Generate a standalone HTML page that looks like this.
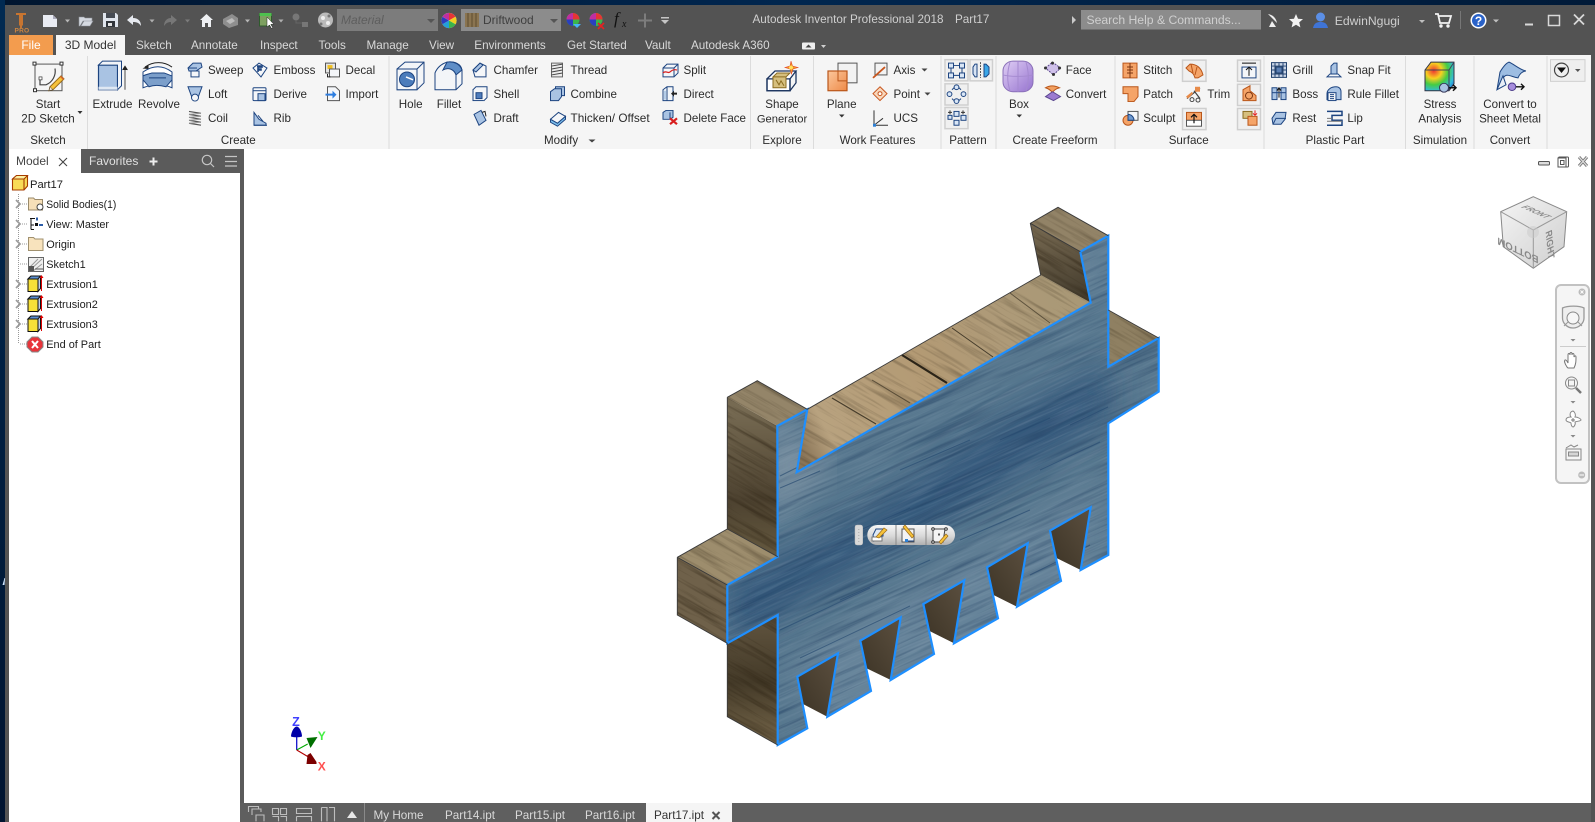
<!DOCTYPE html>
<html><head><meta charset="utf-8"><title>Autodesk Inventor Professional 2018</title>
<style>
html,body{margin:0;padding:0;background:#fff;width:1595px;height:822px;overflow:hidden}
svg{display:block}
text{font-family:"Liberation Sans",sans-serif;font-size:11.6px;fill:#2b2b2b}
.m{text-anchor:middle}
.tb text,text.tb{fill:#d9d9d9;font-size:11.7px}
.tr text{font-size:10.9px;fill:#1c1c1c}
.s{fill:none;stroke:#1d4480;stroke-width:1}
.b{fill:#a9c3e3;stroke:#1d4480;stroke-width:1}
.w{fill:#f4f6f9;stroke:#1d4480;stroke-width:1}
.o{fill:#f5a468;stroke:#b9561a;stroke-width:1}
.g{fill:#e4e4e4;stroke:#555;stroke-width:1}
.bt{fill:#f0f0f0;stroke:#cfcfcf;stroke-width:1.5}
.d{fill:none;stroke:#999;stroke-width:1;stroke-dasharray:1 1}
</style></head><body>
<svg width="1595" height="822" viewBox="0 0 1595 822" xmlns="http://www.w3.org/2000/svg">
<defs>
<linearGradient id="nv" x1="0" x2="1" y1="0" y2="0"><stop offset="0" stop-color="#00152f"/><stop offset=".5" stop-color="#00264f"/><stop offset="1" stop-color="#001a38"/></linearGradient>
<linearGradient id="lf" x1="0" y1="0" x2="0" y2="1"><stop offset="0" stop-color="#012a52"/><stop offset="1" stop-color="#001430"/></linearGradient>
<linearGradient id="pl" x1="0" y1="0" x2="0" y2="1"><stop offset="0" stop-color="#f6f6f6"/><stop offset=".55" stop-color="#d9d9d9"/><stop offset="1" stop-color="#b0b0b0"/></linearGradient>
<linearGradient id="topb" gradientUnits="userSpaceOnUse" x1="800" y1="450" x2="1090" y2="290"><stop offset="0" stop-color="#8a7558"/><stop offset=".1" stop-color="#b8a27f"/><stop offset=".45" stop-color="#b39a74"/><stop offset=".7" stop-color="#ae9a78"/><stop offset="1" stop-color="#a89876"/></linearGradient>
<linearGradient id="sd1" gradientUnits="userSpaceOnUse" x1="750" y1="410" x2="750" y2="560"><stop offset="0" stop-color="#766a52"/><stop offset=".6" stop-color="#4d4230"/><stop offset="1" stop-color="#665a40"/></linearGradient>
<linearGradient id="sd2" gradientUnits="userSpaceOnUse" x1="750" y1="620" x2="750" y2="745"><stop offset="0" stop-color="#5f533e"/><stop offset=".5" stop-color="#443a28"/><stop offset="1" stop-color="#75664a"/></linearGradient>
<linearGradient id="sd3" gradientUnits="userSpaceOnUse" x1="1050" y1="230" x2="1070" y2="300"><stop offset="0" stop-color="#72654e"/><stop offset="1" stop-color="#453d2e"/></linearGradient>
<linearGradient id="nt" x1="0" y1="1" x2="1" y2="0"><stop offset="0" stop-color="#3c3325"/><stop offset="1" stop-color="#5c5040"/></linearGradient>
<linearGradient id="cb" x1="0" y1="0" x2="1" y2="1"><stop offset="0" stop-color="#f4f4f4"/><stop offset="1" stop-color="#cfcfcf"/></linearGradient>
<linearGradient id="bx" x1="0" y1="0" x2="1" y2="1"><stop offset="0" stop-color="#e0cff5"/><stop offset="1" stop-color="#9572cf"/></linearGradient>
<linearGradient id="pln" x1="0" y1="0" x2="1" y2="1"><stop offset="0" stop-color="#fbc79c"/><stop offset="1" stop-color="#ee8a48"/></linearGradient>
<radialGradient id="st" cx=".3" cy=".3" r=".9"><stop offset="0" stop-color="#e33"/><stop offset=".3" stop-color="#f8d020"/><stop offset=".55" stop-color="#4c4"/><stop offset=".8" stop-color="#3bd"/><stop offset="1" stop-color="#26c"/></radialGradient>
<filter id="gb" x="0" y="0" width="1" height="1" color-interpolation-filters="sRGB"><feTurbulence type="fractalNoise" baseFrequency="0.01 0.2" numOctaves="3" seed="4"/><feColorMatrix values="0 0 0 0 .1 0 0 0 0 .22 0 0 0 0 .36 3 0 0 0 -1.45"/></filter>
<filter id="gl" x="0" y="0" width="1" height="1" color-interpolation-filters="sRGB"><feTurbulence type="fractalNoise" baseFrequency="0.02 0.45" numOctaves="2" seed="9"/><feColorMatrix values="0 0 0 0 .62 0 0 0 0 .7 0 0 0 0 .77 2.4 0 0 0 -1.05"/></filter>
<filter id="gt" x="0" y="0" width="1" height="1" color-interpolation-filters="sRGB"><feTurbulence type="fractalNoise" baseFrequency="0.015 0.22" numOctaves="3" seed="12"/><feColorMatrix values="0 0 0 0 .17 0 0 0 0 .13 0 0 0 0 .07 3 0 0 0 -1.45"/></filter>
<filter id="bl"><feGaussianBlur stdDeviation="16"/></filter>
<clipPath id="face"><polygon points="777.3,426 807.3,409.3 796.7,472.3 1090.7,302.7 1080.3,251.7 1108.3,235.7 1108.3,366.7 1158.7,338 1158.7,391.6 1108.3,423.3 1108.3,555 1080.7,570 1090.7,507.3 1050,530.7 1061,581 1017,606.7 1027.7,543.3 987,567.3 998,618.3 954,643.3 964.3,580.3 923.3,604 934,654 890.7,680 900.7,617.3 860.3,640.7 871,691 827.3,716.7 838,653.3 797.3,676.7 807.3,728.3 777.7,745 777.7,615 727.3,643.3 727.3,585 777.7,556.7"/></clipPath>
<clipPath id="tan"><path d="M807.3,409.3 1040.7,275 1090.7,302.7 796.7,472.3zM727.3,397.3 757.3,380.7 807.3,409.3 777.3,426zM1030.3,223.3 1058,207.3 1108.3,235.7 1080.3,251.7zM1108.3,310 1158.7,338 1108.3,366.7zM677.3,557.3 727.3,529 777.7,556.7 727.3,585z"/></clipPath>
<clipPath id="sid"><path d="M727.3,397.3 777.3,426 777.7,556.7 727.3,529zM677.3,557.3 727.3,585 727.3,643.3 677.3,615zM727.3,643.3 777.7,615 777.7,745 727.3,716.7zM1030.3,223.3 1080.3,251.7 1090.7,302.7 1040.7,275z"/></clipPath>
</defs>

<!-- window frame -->
<rect width="1595" height="822" fill="#fff"/>
<rect width="1595" height="5" fill="url(#nv)"/>
<rect y="0" width="5" height="822" fill="url(#lf)"/>
<rect x="5" y="5" width="1590" height="50.500" fill="#535353"/>
<rect x="5" y="5" width="4" height="817" fill="#535353"/>
<rect x="1591" y="5" width="4" height="817" fill="#535353"/>
<path d="M2.500 585l2-7h.6l-.6 7z" fill="#cfe6ff"/>
<rect x="9" y="55" width="1582" height="94" fill="#f5f5f5"/>

<!-- quick access -->
<g>
<path d="M16 13h10v2h-3v10l-1 1v2h-2v-2l-1-1V15h-3z" fill="#c87530"/>
<text x="14.500" y="32.500" style="font-size:6.600px;font-weight:bold;fill:#d08640;letter-spacing:.2px">PRO</text>
<path d="M43 15h10l4 4v8H43z" fill="#e8ebf2"/><path d="M53 15l4 4h-4z" fill="#aab"/>
<path d="M65 19.500h5l-2.500 3z" fill="#b8b8b8"/>
<path d="M79 17h5l1 1h7v3H83l-3 5h-1zM81 26l3-5h9l-3 5z" fill="#d5d9e0" stroke="#8b8f96" stroke-width=".6"/>
<path d="M103 13h13l2 2v12h-15z" fill="#dfe4ec"/><rect x="106" y="13" width="9" height="5" fill="#454a52"/><rect x="106" y="21" width="9" height="6" fill="#30343a"/><rect x="108" y="23" width="4" height="3" fill="#e5e5e5"/>
<path d="M127 20l6-5v3c5 0 8 3 8 8-2-3-4-4-8-4v3z" fill="#e6e9ef"/>
<path d="M149.500 19.500h5l-2.500 3z" fill="#b0b0b0"/>
<path d="M177 20l-6-5v3c-4 0-7 3-7 8 2-3 4-4 7-4v3z" fill="#777"/>
<path d="M185 19.500h5l-2.500 3z" fill="#7c7c7c"/>
<path d="M200 20l6.500-6 6.500 6h-2v7h-3v-4h-3v4h-3v-7z" fill="#eef0f3"/>
<path d="M223 19l9-5 6 4v7l-9 3-6-4z" fill="#8e8e8e"/><path d="M226 21l6-3 3 3-5 3z" fill="#bbb"/>
<path d="M245 19.500h5l-2.500 3z" fill="#b8b8b8"/>
<rect x="259.500" y="14" width="12" height="12" fill="#7da060" stroke="#2e5b2c"/><rect x="259.500" y="13" width="12" height="3" fill="#4ec04e"/>
<path d="M267 17v10l2.500-2 2 3.500 1.300-.8-2-3.300H274z" fill="#fff" stroke="#222" stroke-width=".5"/>
<path d="M278.500 19.500h5l-2.500 3z" fill="#b0b0b0"/>
<circle cx="296" cy="17" r="3.500" fill="#777"/><rect x="302" y="22" width="6" height="5" fill="#777"/><path d="M296 20v3h6" stroke="#666" fill="none"/>
<circle cx="325.500" cy="20" r="7.500" fill="#bbb"/><circle cx="323" cy="18" r="2" fill="#eee"/><circle cx="328" cy="23" r="2" fill="#eee"/><circle cx="329" cy="16" r="1.500" fill="#777"/><circle cx="321" cy="24" r="1.500" fill="#777"/>
<rect x="337" y="9" width="101" height="22" fill="#7c7c7c"/>
<text x="341" y="24" style="font-style:italic;fill:#5e5e5e;font-size:12px">Material</text>
<path d="M427 19h8l-4 4z" fill="#555"/>
<circle cx="449" cy="20.500" r="7.500" fill="#fff" stroke="#999" stroke-width=".5"/>
<path d="M449 20.500V13a7.500 7.500 0 0 1 6.500 3.800z" fill="#e63535"/><path d="M449 20.500l6.500-3.700a7.500 7.500 0 0 1 0 7.500z" fill="#f0d020"/><path d="M449 20.500l6.500 3.800a7.500 7.500 0 0 1-6.500 3.700z" fill="#3cb54a"/><path d="M449 20.500V28a7.500 7.500 0 0 1-6.500-3.700z" fill="#23a0d8"/><path d="M449 20.500l-6.500 3.800a7.500 7.500 0 0 1 0-7.500z" fill="#2a3fbf"/><path d="M449 20.500l-6.500-3.700A7.500 7.500 0 0 1 449 13z" fill="#c02ea0"/>
<rect x="461" y="9" width="100" height="22" fill="#8c8c8c"/>
<rect x="465" y="13" width="14" height="14" fill="#8a7450"/><path d="M468 13v14M472 13v14M476 13v14" stroke="#5c4b30"/>
<text x="483" y="24" style="fill:#3f3f3f;font-size:12px">Driftwood</text>
<path d="M550 19h8l-4 4z" fill="#555"/>
<g id="wh"><circle cx="573" cy="19.500" r="6.500" fill="#3cb54a"/><path d="M573 19.500v-6.500a6.500 6.500 0 0 1 6.500 6.500z" fill="#e63535"/><path d="M573 19.500h-6.500a6.500 6.500 0 0 1 6.500-6.500z" fill="#c02ea0"/><path d="M573 19.500v6.500a6.500 6.500 0 0 1-6.500-6.500z" fill="#2a3fbf"/></g>
<path d="M573 24h8l-4 4z" fill="#47b4f4"/>
<use href="#wh" x="23"/>
<path d="M598 23l6 6M604 23l-6 6" stroke="#e42222" stroke-width="1.700"/>
<text x="614" y="24" style="font-family:'Liberation Serif',serif;font-style:italic;font-size:17px;fill:#111">f</text><text x="622" y="27" style="font-family:'Liberation Serif',serif;font-style:italic;font-size:10px;fill:#111">x</text>
<path d="M645 13.500v14M638 20.500h14" stroke="#7d7d7d" stroke-width="2"/>
<path d="M661 17h8v1.500h-8zM661 20h8l-4 4z" fill="#c5c5c5"/>
<text x="752.500" y="23" class="tb" style="font-size:11.700px;fill:#cfcfcf">Autodesk Inventor Professional 2018</text>
<text x="955" y="23" class="tb" style="fill:#cfcfcf">Part17</text>
</g>

<!-- right of title -->
<path d="M1072 16l4 4-4 4z" fill="#c9c9c9"/>
<rect x="1081" y="10" width="180" height="19.500" fill="#8c8c8c"/>
<text x="1086.500" y="24" style="fill:#cfcfcf;font-size:12.200px">Search Help &amp; Commands...</text>
<path d="M1268 14c5 1 8 4 9 9l-9-9zM1272 21l-3 6h7z" fill="#eee"/>
<path d="M1296 14l2 4.700 5 .4-3.800 3.300 1.200 5-4.400-2.700-4.400 2.700 1.200-5-3.800-3.300 5-.4z" fill="#f2f2f2"/>
<circle cx="1320.500" cy="17" r="4.500" fill="#5b8fe6"/><path d="M1313 28c1-5 4-6 7.500-6s6.500 1 7.500 6z" fill="#3f74d6"/>
<text x="1334.700" y="25" class="tb" style="font-size:12.200px;fill:#cfcfcf">EdwinNgugi</text>
<path d="M1419 20h6l-3 3z" fill="#c0c0c0"/>
<path d="M1435 14h3l2 9h9l2-7h-12" fill="none" stroke="#f2f2f2" stroke-width="1.800"/><circle cx="1441" cy="26" r="1.700" fill="#f2f2f2"/><circle cx="1448" cy="26" r="1.700" fill="#f2f2f2"/>
<rect x="1460" y="11" width="1" height="18" fill="#777"/>
<circle cx="1478.500" cy="20.500" r="8" fill="#fff"/><circle cx="1478.500" cy="20.500" r="6.500" fill="#2a62c8"/><text x="1478.500" y="25" class="m" style="font-size:12px;font-weight:bold;fill:#fff">?</text>
<path d="M1493 19.500h6l-3 3z" fill="#c0c0c0"/>
<rect x="1525" y="23.500" width="8" height="2" fill="#d8d8d8"/>
<rect x="1548.500" y="15.500" width="11" height="10" fill="none" stroke="#d8d8d8" stroke-width="1.500"/>
<path d="M1574 14.500l10 10M1584 14.500l-10 10" stroke="#d8d8d8" stroke-width="1.800"/>

<!-- tabs -->
<rect x="9" y="35" width="44" height="20" fill="#f39c4e"/>
<text x="31" y="49" class="m" style="fill:#fff;font-size:12px">File</text>
<rect x="56" y="35" width="69" height="21" fill="#f5f5f5"/>
<text x="90.500" y="49" class="m" style="font-size:12px;fill:#333">3D Model</text>
<g class="tb">
<text x="136" y="49">Sketch</text><text x="191" y="49">Annotate</text><text x="260" y="49">Inspect</text><text x="318.500" y="49">Tools</text><text x="366.500" y="49">Manage</text><text x="429" y="49">View</text><text x="474.300" y="49">Environments</text><text x="567" y="49">Get Started</text><text x="645" y="49">Vault</text><text x="691" y="49">Autodesk A360</text>
</g>
<rect x="802" y="42.500" width="13" height="7" rx="1" fill="#eee"/><path d="M805.500 47.500h6l-3-3z" fill="#444"/><path d="M821 45h5l-2.500 3z" fill="#d0d0d0"/>

<!-- ribbon dividers -->
<g fill="#dcdcdc"><rect x="87" y="56" width="1" height="93"/><rect x="388.500" y="56" width="1" height="93"/><rect x="750" y="56" width="1" height="93"/><rect x="813" y="56" width="1" height="93"/><rect x="940.500" y="56" width="1" height="93"/><rect x="995.500" y="56" width="1" height="93"/><rect x="1114.500" y="56" width="1" height="93"/><rect x="1263.500" y="56" width="1" height="93"/><rect x="1405" y="56" width="1" height="93"/><rect x="1473.500" y="56" width="1" height="93"/><rect x="1546.500" y="56" width="1" height="93"/></g>

<!-- ribbon text -->
<g>
<text x="48" y="108" class="m">Start</text><text x="48" y="122.500" class="m">2D Sketch</text><path d="M77.500 111h5l-2.500 3z" fill="#333"/><text x="48" y="144" class="m">Sketch</text>
<text x="112.500" y="108" class="m">Extrude</text><text x="159" y="108" class="m">Revolve</text><text x="238.300" y="144" class="m">Create</text>
<text x="208" y="74">Sweep</text><text x="208" y="98">Loft</text><text x="208" y="122">Coil</text>
<text x="273.500" y="74">Emboss</text><text x="273.500" y="98">Derive</text><text x="273.500" y="122">Rib</text>
<text x="345.500" y="74">Decal</text><text x="345.500" y="98">Import</text>
<text x="410.700" y="108" class="m">Hole</text><text x="449" y="108" class="m">Fillet</text>
<text x="493.500" y="74">Chamfer</text><text x="493.500" y="98">Shell</text><text x="493.500" y="122">Draft</text>
<text x="570.500" y="74">Thread</text><text x="570.500" y="98">Combine</text><text x="570.500" y="122" style="font-size:11.800px">Thicken/ Offset</text>
<text x="683.500" y="74">Split</text><text x="683.500" y="98">Direct</text><text x="683.500" y="122">Delete Face</text>
<text x="544" y="144">Modify</text><path d="M588.500 139.500h7l-3.500 3z" fill="#444"/>
<text x="782" y="108" class="m">Shape</text><text x="782" y="122.500" class="m" style="font-size:11.200px">Generator</text><text x="782" y="144" class="m">Explore</text>
<text x="841.700" y="108" class="m">Plane</text><path d="M839 114.500h5.500l-2.700 3z" fill="#333"/>
<text x="893.500" y="74">Axis</text><text x="893.500" y="98">Point</text><text x="893.500" y="122">UCS</text>
<path d="M921.500 68.500h6l-3 3z" fill="#444"/><path d="M924.500 92.500h6l-3 3z" fill="#444"/>
<text x="877.500" y="144" class="m">Work Features</text><text x="968" y="144" class="m">Pattern</text>
<text x="1019" y="108" class="m">Box</text><path d="M1016.500 114.500h5.500l-2.700 3z" fill="#333"/>
<text x="1065.800" y="74">Face</text><text x="1065.800" y="98">Convert</text><text x="1055" y="144" class="m">Create Freeform</text>
<text x="1143.300" y="74">Stitch</text><text x="1143.300" y="98">Patch</text><text x="1143.300" y="122">Sculpt</text><text x="1207.400" y="98">Trim</text><text x="1188.700" y="144" class="m">Surface</text>
<text x="1292.400" y="74">Grill</text><text x="1292.400" y="98">Boss</text><text x="1292.400" y="122">Rest</text>
<text x="1347.400" y="74">Snap Fit</text><text x="1347.400" y="98">Rule Fillet</text><text x="1347.400" y="122">Lip</text><text x="1335" y="144" class="m">Plastic Part</text>
<text x="1440" y="108" class="m">Stress</text><text x="1440" y="122.500" class="m">Analysis</text><text x="1440" y="144" class="m">Simulation</text>
<text x="1510" y="108" class="m">Convert to</text><text x="1510" y="122.500" class="m">Sheet Metal</text><text x="1510" y="144" class="m">Convert</text>
</g>

<g transform="scale(1 .986)">
<!-- ribbon icons: sketch -->
<rect x="35" y="65" width="27" height="27" fill="none" stroke="#555"/>
<g fill="#fff" stroke="#333"><rect x="33" y="63" width="3" height="3"/><rect x="60" y="63" width="3" height="3"/><rect x="33.500" y="90" width="3" height="3"/></g>
<path d="M40 79.500v6.500h6a15 15 0 0 0 9-16.500" fill="none" stroke="#444" stroke-width="1.200"/><rect x="39" y="78" width="3" height="3" fill="#fff" stroke="#333" stroke-width=".7"/>
<path d="M50 88l11-11 3 3-11 11-4 1z" fill="#f6c23a" stroke="#9a6a1a"/><path d="M50 88l3 3-4 1z" fill="#f8e4c8" stroke="#333" stroke-width=".5"/><path d="M60 78l3 3 1-1-3-3z" fill="#d9642c"/>
<!-- extrude -->
<rect x="98.500" y="66" width="19" height="25" class="b" style="stroke-width:1.200"/><path d="M98.500 66l4-4h19v25l-4 4V66z" fill="#f1f4f8" stroke="#1d4480"/><path d="M98.500 88h19v3h-19z" fill="#dfe8f3"/>
<path d="M125 91V69M122.500 71l2.500-4 2.500 4" stroke="#222" fill="#222" stroke-width=".8"/>
<!-- revolve -->
<path d="M143 73c10-7 20-7 29 0v16c-9-4-19-4-29 0z" fill="#fff" stroke="#1d4480"/><path d="M143 77c4-2 6-2 9-3l12 0c3 1 5 2 8 3v4l-6 7c-7-2-12-2-17 0l-6-7z" fill="#7c9fca" stroke="#1d4480"/><path d="M149 79h17" stroke="#1d4480"/>
<path d="M145 68c8-6 19-6 27 0" fill="none" stroke="#222"/><path d="M142.500 69.500l6-3.500v4z" fill="#222"/>
<!-- sweep -->
<g transform="translate(187 63)"><path d="M1 6l5-5h8l1 4-6 4H2z" class="b"/><rect x="4" y="9" width="8" height="6" class="w"/><path d="M1 6h9" class="s"/></g>
<!-- loft -->
<g transform="translate(187 87)"><path d="M1 1h14l-4 11H5z" class="b"/><circle cx="8" cy="12" r="3.500" class="w"/></g>
<!-- coil -->
<g transform="translate(188 112)" stroke="#555" stroke-width="1.200"><path d="M1 1l12 2M1 4l12 2M1 7l12 2M1 10l12 2M1 13l12 2"/></g><g transform="translate(188 112)" stroke="#999"><path d="M13 3L1 4M13 6L1 7M13 9L1 10M13 12L1 13"/></g>
<!-- emboss -->
<g transform="translate(252 63)"><path d="M1 6L7 1l8 5-6 9z" class="w"/><path d="M5 4h5v1H6v2h3v1H6v2" stroke="#1d4480" stroke-width="1.600" fill="none"/></g>
<!-- derive -->
<g transform="translate(252 87)"><rect x="1" y="2" width="13" height="13" rx="1" class="w"/><path d="M1 5h13" class="s"/><rect x="6" y="8" width="7" height="7" class="b"/></g>
<!-- rib -->
<g transform="translate(252 112)"><path d="M2 15V2l5 7 7 4v2z" class="b"/><path d="M2 15h13M6 5l5 6" class="s"/></g>
<!-- decal -->
<g transform="translate(324.500 63)"><rect x="1" y="1" width="10" height="10" class="g"/><rect x="3" y="3" width="5" height="4" fill="#f0c020"/><rect x="5" y="7" width="10" height="8" class="w" style="stroke:#555"/><path d="M3 12v3h3" stroke="#222" fill="none"/></g>
<!-- import -->
<g transform="translate(324.500 87)"><path d="M3 1h8l4 4v10H3z" class="w" style="stroke:#555"/><path d="M1 8h7V5l4 4-4 4v-3H1z" fill="#2d7de0"/></g>
<!-- hole -->
<path d="M397 70l8-7h19v21l-7 7h-20z" fill="#f3f5f8" stroke="#1d4480"/><path d="M397 70h20v21M417 70l7-7" class="s"/><rect x="397" y="70" width="20" height="21" class="w"/><circle cx="407" cy="80.500" r="7.500" fill="#4b7cbb" stroke="#1d4480"/><path d="M406 78l7 3" stroke="#fff" stroke-width="1.500"/>
<!-- fillet -->
<path d="M435 91V74c2-5 6-9 12-11 8-1 14 2 15 8v14l-6 6z" fill="#f3f5f8" stroke="#1d4480"/><path d="M447 63c7-1 13 2 15 8l-6 5c-2-6-8-8-13-5z" fill="#5f8ec7" stroke="#1d4480"/><path d="M456 76v15" class="s"/>
<!-- chamfer -->
<g transform="translate(472 63)"><path d="M1 8l7-7 6 3v11H3z" class="w"/><path d="M1 8l7-7 3 2-7 7z" class="b"/></g>
<!-- shell -->
<g transform="translate(472 87)"><rect x="1" y="4" width="11" height="11" class="w"/><path d="M1 4l3-3h11v11l-3 3" class="w"/><rect x="4" y="7" width="6" height="6" fill="#4e7cbc" stroke="#1d4480"/></g>
<!-- draft -->
<g transform="translate(472 111)"><path d="M2 5l7-4 5 10-7 5z" class="b"/><path d="M10 3l3-1 1 5" class="s" style="stroke:#222"/></g>
<!-- thread -->
<g transform="translate(549.500 63)"><rect x="2" y="1" width="11" height="14" fill="#ececec" stroke="#666"/><path d="M2 4l11-2M2 7l11-2M2 10l11-2M2 13l11-2" stroke="#444"/></g>
<!-- combine -->
<g transform="translate(549.500 87)"><path d="M6 1h9v9H6z" class="b"/><path d="M1 6l4-3h7v8l-3 4H1z" class="b"/></g>
<!-- thicken -->
<g transform="translate(549.500 112)"><path d="M1 9l8-7 7 4-8 7z" class="w"/><path d="M1 9v3l7 4 8-7V6l-8 7z" fill="#7cc0ee" stroke="#1d4480"/></g>
<!-- split -->
<g transform="translate(662 63)"><path d="M1 6l4-4h11v9l-4 4H1z" class="w"/><path d="M1 6h11v9M12 6l4-4" class="s"/><path d="M1 11c3-3 5 1 7-1s4-3 7-2" stroke="#d81e1e" fill="none" stroke-width="1.200"/></g>
<!-- direct -->
<g transform="translate(662 87)"><path d="M1 4l4-3h6v14H1z" class="w"/><path d="M5 1v14" class="s"/><path d="M9 8l3-3v2h3v2h-3v2z" fill="#222"/><rect x="2" y="5" width="2" height="9" fill="#b5cde8"/></g>
<!-- delete face -->
<g transform="translate(662 111)"><path d="M1 3l3-2h7v7l-3 2H1z" class="b"/><path d="M8 3v7" class="s"/><path d="M8 9l7 6M15 9l-7 6" stroke="#d81e1e" stroke-width="2.200"/></g>
<!-- shape generator -->
<path d="M767 80l8-8h21l-6 8v12h-23z" fill="#fff" stroke="#1d3560" stroke-width="1.300"/><rect x="767" y="80" width="23" height="12" fill="none" stroke="#1d3560" stroke-width="1.300"/><path d="M790 92l6-8V72" fill="none" stroke="#1d3560" stroke-width="1.300"/>
<path d="M773 78h13l4-4h-13z M773 78v11h13V78" fill="#d6bf7e" stroke="#8a6b20"/><path d="M776 81l3 5 2-4 3 5" stroke="#8a6b20" fill="none"/>
<path d="M791 62l1.500 5 5.500 1.500-5 1.500-1.500 5-1.500-5-5-1.500 5-1.500z" fill="#f0a020" stroke="#e4452a" stroke-width=".6"/><circle cx="791" cy="68.500" r="2" fill="#ffe060"/>
<!-- plane -->
<rect x="838" y="64" width="19" height="20" fill="#f2f2f2" stroke="#555"/>
<rect x="828" y="72" width="19" height="20" fill="url(#pln)" stroke="#b9561a" stroke-width="1.200"/><path d="M838 72v10h9" stroke="#b9561a" fill="none"/>
<!-- axis -->
<g transform="translate(872 63)"><rect x="3" y="1" width="12" height="12" fill="#f3f3f3" stroke="#555"/><path d="M1 16l12-11" stroke="#c8561e" stroke-width="1.800"/></g>
<!-- point -->
<g transform="translate(872 87)"><path d="M8 1l7 7-7 7-7-7z" fill="#f8d8bd" stroke="#c8561e"/><circle cx="8" cy="8" r="2" fill="#fff" stroke="#c8561e"/></g>
<!-- ucs -->
<g transform="translate(873 111)"><path d="M1 1v15h14M1 16l9-7" stroke="#333" fill="none"/><rect x="0" y="14.500" width="3" height="3" fill="#2c7fd4"/></g>
<!-- pattern -->
<rect x="945" y="60.500" width="23" height="21.500" class="bt"/><rect x="970" y="60.500" width="22.500" height="21.500" class="bt"/><rect x="945" y="85" width="23" height="21.500" class="bt"/><rect x="945" y="109" width="23" height="21.500" class="bt"/>
<g fill="#d9e6f6" stroke="#1d4480"><rect x="948.500" y="64" width="5" height="5"/><rect x="959.500" y="64" width="5" height="5"/><rect x="948.500" y="74" width="5" height="5"/><rect x="959.500" y="74" width="5" height="5"/>
<circle cx="956.500" cy="88.500" r="2.400"/><circle cx="956.500" cy="102.500" r="2.400"/><circle cx="949.500" cy="95.500" r="2.400"/><circle cx="963.500" cy="95.500" r="2.400"/>
<rect x="954" y="113" width="5" height="5"/><rect x="954" y="122" width="5" height="5"/><rect x="961" y="117" width="5" height="5"/><rect x="948" y="117" width="4" height="4"/></g>
<path d="M953.500 66.500h6M951 69v5M962 69v5M953.500 76.500h6" stroke="#1d4480"/>
<path d="M952 91l2-2M961 91l-2-2M952 100l2 2M961 100l-2 2" stroke="#1d4480"/>
<path d="M950 112v4M948 114h4M963 112v4M961 114h4" stroke="#333"/>
<path d="M975 65l-2 3v7l2 3h2V65z" fill="#d8e4f4" stroke="#1d4480"/><path d="M986 65l3 3v7l-3 3h-2V65z" fill="#3aa6e8" stroke="#1d4480"/><path d="M980.500 63v16" stroke="#555" stroke-dasharray="2 1"/>
<!-- box -->
<rect x="1003" y="62" width="30" height="31" rx="10" fill="url(#bx)" stroke="#8a70b8"/><path d="M1003 76c8 2 22 2 30 0M1018 62v31M1010 63c-3 10-3 20 0 29M1026 63c3 10 3 20 0 29" stroke="#a58ad0" fill="none"/>
<!-- face / convert freeform -->
<g transform="translate(1044.500 62)"><path d="M1 7l7-6 8 6-7 7z" fill="#cfc0ea" stroke="#5c4890" stroke-dasharray="2 1"/><circle cx="8" cy="2" r="1.500" fill="#333"/><circle cx="1" cy="7" r="1.500" fill="#333"/><circle cx="15" cy="7" r="1.500" fill="#333"/><circle cx="9" cy="13.500" r="1.500" fill="#333"/></g>
<g transform="translate(1044.500 86)"><path d="M1 3c5-3 10-2 14 0-4 1-6 3-7 5-2-3-4-4-7-5z" fill="#f2a060" stroke="#b9561a"/><path d="M1 12l7-5 8 5-7 4z" fill="#9b7ad0" stroke="#5c4890"/></g>
<!-- surface -->
<g transform="translate(1122 63)"><rect x="1" y="1" width="14" height="15" class="o"/><path d="M8 1v15M5 5h6M5 8h6M5 11h6" stroke="#7a3510"/></g>
<g transform="translate(1122 87)"><path d="M1 1h15v10l-4 5H6V8H1z" class="o"/></g>
<g transform="translate(1122 111)"><circle cx="6" cy="11" r="5" class="o"/><rect x="6" y="2" width="10" height="9" class="w" style="stroke:#555"/><path d="M6 11V5a6 6 0 0 1 6 6z" fill="#6e99cf" stroke="#1d4480"/></g>
<rect x="1182.500" y="61" width="23.500" height="21.500" class="bt"/><rect x="1182.500" y="110" width="23.500" height="21.500" class="bt"/>
<path d="M1186 69l4-4c6 0 11 3 13 11l-5 3-3 0c-1-4-3-6-6-7z" class="o"/><path d="M1191 65l2 9M1197 68l-2 8" stroke="#b9561a"/>
<rect x="1186.500" y="114" width="15" height="8" class="o"/><rect x="1186.500" y="122" width="15" height="6" fill="#fff" stroke="#555"/><path d="M1194 125v-9M1191 119l3-3 3 3" stroke="#111" fill="none" stroke-width="1.200"/>
<g transform="translate(1186 87)"><path d="M1 13l13-11M8 5l6 8" stroke="#444" stroke-width="1.200"/><circle cx="6" cy="14" r="2" fill="none" stroke="#444"/><circle cx="12" cy="14.500" r="2" fill="none" stroke="#444"/><path d="M0 11l6-5 1 2-5 5z" fill="#e78b4a"/><path d="M9 1l5 0v5l-5 0z" fill="#e78b4a"/></g>
<rect x="1237.500" y="61" width="23" height="21.500" class="bt"/><rect x="1237.500" y="85.500" width="23" height="21.500" class="bt"/><rect x="1237.500" y="110" width="23" height="21.500" class="bt"/>
<rect x="1242" y="68" width="14" height="11" class="w"/><path d="M1249 77v-9M1246 71l3-3 3 3M1242 64h14" stroke="#111" fill="none"/>
<path d="M1243 91l7-4v5l6 5v5h-13z" class="o"/><circle cx="1249" cy="97" r="3.500" fill="none" stroke="#7a3510"/>
<rect x="1243" y="113" width="9" height="7" fill="#d6bf7e" stroke="#8a6b20"/><rect x="1248" y="118" width="9" height="9" class="o"/><path d="M1255 112v5M1253 115l2 2 2-2" stroke="#e42222" fill="none"/>
<!-- plastic -->
<g transform="translate(1271 63)" stroke="#23426e"><rect x="0.500" y="0.500" width="15" height="15" fill="#c7d3e5"/><path d="M4 1v14M8 1v14M12 1v14M1 4h14M1 8h14M1 12h14" fill="none"/><rect x="5" y="5" width="6" height="6" fill="#5b7fb3"/></g>
<g transform="translate(1271 87)"><rect x="1" y="2" width="5" height="12" class="b"/><rect x="10" y="2" width="5" height="12" class="b"/><path d="M8 12V3M6 5l2-3 2 3" stroke="#111" fill="none"/><path d="M1 7h14" class="s"/></g>
<g transform="translate(1271 111)"><path d="M1 9l4-6h10l-1 7-4 5H2z" class="b"/><path d="M2 15l3-6h10" class="s"/></g>
<g transform="translate(1326 63)"><path d="M5 13V4l3-3h3v12z" class="b"/><path d="M1 15h14l-3-3H4z" class="w"/></g>
<g transform="translate(1326 87)"><path d="M1 14V8c0-4 4-7 9-7 3 0 5 2 5 5v8z" class="b"/><rect x="2" y="7" width="8" height="8" class="w"/><path d="M4 9h4M4 11h4M4 13h4" class="s"/></g>
<g transform="translate(1326 111)"><path d="M1 2h15v4H6v5h10v5H1" class="w" style="stroke-width:1.500"/><path d="M1 9h5M1 12h15" stroke="#777"/></g>
<!-- stress -->
<path d="M1425 71l6-8h23v22l-5 7h-24z" fill="url(#st)" stroke="#334"/><path d="M1425 71h24v21M1449 71l5-8" fill="none" stroke="#445"/>
<circle cx="1444" cy="89" r="4.500" fill="#a9c3e3" stroke="#335"/><path d="M1449 89h6M1453 86l3 3-3 3" stroke="#111" stroke-width="1.500" fill="none"/>
<!-- convert sheet metal -->
<path d="M1497 91l3-18c3-5 6-9 9-10 5 2 11 8 17 9-4 0-7 4-8 7-6-1-10-4-13-2-3 2-6 10-8 14z" fill="#9dbde2" stroke="#1d4480"/><path d="M1497 91l6-14 3 9z" fill="#e8eef6" stroke="#1d4480"/>
<circle cx="1512" cy="88" r="3.800" fill="#a68cdc" stroke="#4a3a8a"/><path d="M1516 88h8M1521 85l3 3-3 3" stroke="#111" stroke-width="1.400" fill="none"/>
<!-- ribbon dropdown -->
<rect x="1550.500" y="60.500" width="34.500" height="22" fill="#efefef" stroke="#cfcfcf"/>
<circle cx="1561.500" cy="71" r="7" fill="none" stroke="#444" stroke-width="1.200"/><path d="M1557 68.500h9l-4.500 5.500z" fill="#111"/><path d="M1575 70h5.500l-2.700 3z" fill="#555"/>
</g>

<!-- Panel -->
<rect x="81" y="149" width="163" height="24" fill="#5b5b5b"/>
<rect x="240" y="149" width="4" height="673" fill="#5b5b5b"/>
<text x="16" y="165" style="font-size:12px;fill:#444">Model</text>
<path d="M59 158l8 8M67 158l-8 8" stroke="#444" stroke-width="1.100"/>
<text x="89" y="165" style="font-size:12px;fill:#e0e0e0">Favorites</text>
<path d="M153.500 157.500v8M149.500 161.500h8" stroke="#eee" stroke-width="2"/>
<circle cx="207" cy="160" r="4.700" fill="none" stroke="#c5c5c5" stroke-width="1.200"/><path d="M210.500 163.500l3.500 3.500" stroke="#c5c5c5" stroke-width="1.200"/>
<path d="M225 156.500h12M225 161.500h12M225 166h12" stroke="#c5c5c5" stroke-width="1.200"/>

<!-- tree -->
<path class="d" d="M18.500 194V344M20 204h8M20 224h8M20 244h8M20 264h8M20 284h8M20 304h8M20 324h8M20 344h8"/>
<g class="tr">
<text x="30" y="188" style="font-size:11.200px">Part17</text>
<text x="46.300" y="208" textLength="70" lengthAdjust="spacingAndGlyphs">Solid Bodies(1)</text><text x="46.300" y="228">View: Master</text><text x="46.300" y="248">Origin</text><text x="46.300" y="268">Sketch1</text><text x="46.300" y="288">Extrusion1</text><text x="46.300" y="308">Extrusion2</text><text x="46.300" y="328">Extrusion3</text><text x="46.300" y="348">End of Part</text>
</g>
<path d="M12.500 179l4-3.500h11V186l-3.500 4H12.500z" fill="#f8dc58" stroke="#a63c00" stroke-width="1.100"/><path d="M12.500 179H24v11M24 179l3.500-3.500" fill="none" stroke="#a63c00" stroke-width="1.100"/><path d="M12.500 179l4-3.500h11L24 179z" fill="#fdf0a0" stroke="#a63c00"/>
<g fill="none" stroke="#9a9a9a" stroke-width="1.700"><path d="M16 200l4 4-4 4M16 220l4 4-4 4M16 240l4 4-4 4M16 280l4 4-4 4M16 300l4 4-4 4M16 320l4 4-4 4"/></g>
<path d="M28.500 198h5l1.500 1.500h7.500V210h-14z" fill="#f6dfb8" stroke="#9a8a6a"/><circle cx="40" cy="207" r="3" fill="#fff" stroke="#444"/>
<path d="M30 218.500h5M31 218.500v11M31 225h3M31 229.500h3" stroke="#111" fill="none"/><rect x="35" y="223" width="3" height="3" fill="#111"/><rect x="39" y="224" width="4" height="2" fill="#2c5da8"/><rect x="36" y="217.500" width="2" height="3" fill="#2c5da8"/>
<path d="M28.500 237.500h5l1.500 1.500h8v11.500H28.500z" fill="#f8e3bd" stroke="#a0906e"/>
<g transform="translate(28 257)"><rect x=".5" y=".5" width="15" height="14" fill="#efefef" stroke="#666"/><path d="M1 14L14 2M2 10l8-8M5 14l9-7" stroke="#999"/><path d="M1 9h5v5H1z" fill="#555"/><path d="M7 12h8" stroke="#555"/></g>
<g id="ex"><rect x="28" y="279" width="10" height="12.500" fill="#f6e038" stroke="#111"/><path d="M28 279l3-3h9.500v12.500l-2.500 3V279z" fill="#c0d0e8" stroke="#111"/><path d="M28 279l3-3h9.500L38 279z" fill="#5b8fd0" stroke="#111"/><path d="M41.500 291v-14" stroke="#d00"/><path d="M39.500 278l2-3 2 3z" fill="#d00"/></g>
<use href="#ex" y="20"/><use href="#ex" y="40"/>
<path d="M32 337h6l5 5v5l-5 5h-6l-5-5v-5z" fill="#e8343a" stroke="#888"/><path d="M32 341l6 7M38 341l-6 7" stroke="#fff" stroke-width="2"/>

<!-- bottom bar -->
<rect x="240" y="803" width="1351" height="19" fill="#5f5f5f"/>
<g fill="none" stroke="#bdbdbd" stroke-width="1.100"><path d="M248.500 812v-5.500h10V809M252 815v-6h9v3M256 821.400v-6.400h8v6.400"/><path d="M272.500 808.500h6v6h-6zM280.500 808.500h6v6h-6zM272.500 816.500h6v4.900M280.500 816.500h6v4.900"/><path d="M296.500 808.500h15v5h-15zM296.500 816.500h15v4.900M296.500 816.500v4.900"/><path d="M321.500 807.500h5.500V821.400M329 807.500h5.500V821.400M321.500 807.500V821.400"/></g>
<path d="M347 818l5-7 5 7z" fill="#e8e8e8"/><rect x="364" y="803" width="1" height="19" fill="#8a8a8a"/>
<g class="tb"><text x="373.500" y="818.800">My Home</text><text x="445" y="818.800">Part14.ipt</text><text x="515" y="818.800">Part15.ipt</text><text x="585" y="818.800">Part16.ipt</text></g>
<rect x="646" y="803" width="86" height="19" fill="#f5f5f5"/>
<text x="654" y="818.800" style="fill:#333;font-size:11.700px">Part17.ipt</text>
<path d="M712.500 812l7 7M719.500 812l-7 7" stroke="#555" stroke-width="2"/>

<!-- window buttons -->
<rect x="1538.500" y="161.500" width="11" height="3.500" rx="1" fill="#ddd" stroke="#555"/>
<rect x="1558.500" y="157" width="10" height="10" rx="1" fill="none" stroke="#555"/><rect x="1558" y="158" width="8" height="9" fill="#fff" stroke="#555"/><rect x="1560.500" y="160.500" width="3.500" height="4" fill="none" stroke="#555"/>
<path d="M1579 157l8 9M1587 157l-8 9" stroke="#777" stroke-width="3"/><path d="M1579 157l8 9M1587 157l-8 9" stroke="#ddd" stroke-width="1.300"/>

<!-- view cube -->
<path d="M1533.300 196.700l33.400 15-2.700 35-30.700 21.600-30-21.600-2.600-35z" fill="url(#cb)" stroke="#888"/>
<path d="M1500.700 211.700l32.600 18.300 33.400-18.300M1533.300 230v38.300" fill="none" stroke="#999"/>
<circle cx="1533" cy="232" r="6" fill="#c9c9c9" opacity=".5"/>
<text transform="translate(1533.500 213) matrix(.82 .36 -.9 .38 0 0)" class="m" style="font-size:9px;fill:#888;font-style:italic;font-weight:bold">FRONT</text>
<text transform="translate(1518 247) matrix(-.95 -.45 0 -1 0 0)" class="m" style="font-size:10px;fill:#888;font-weight:bold">BOTTOM</text>
<text transform="translate(1547 246) matrix(.1 1 -1 .45 0 0)" class="m" style="font-size:9px;fill:#888;font-weight:bold">RIGHT</text>

<!-- nav bar -->
<rect x="1556" y="285" width="33" height="198" rx="5" fill="#f5f5f5" stroke="#c2c2c2" stroke-width="2"/>
<circle cx="1582" cy="292" r="3.500" fill="#bbb"/><path d="M1580.500 290.500l3 3M1583.500 290.500l-3 3" stroke="#fff"/>
<path d="M1562.500 308c5-2.500 17-2.500 21.500 0v10c0 6-6 10-11 10-6 0-10.500-5-10.500-10z" fill="#eee" stroke="#999" stroke-width="1.300"/><circle cx="1573" cy="318" r="6" fill="#f6f6f6" stroke="#888"/><path d="M1564 326l4-4M1582 326l-4-4" stroke="#999"/>
<path d="M1570.500 339h5l-2.500 2.500z" fill="#888"/><rect x="1560" y="346" width="26" height="1" fill="#ccc"/>
<path d="M1567 367c-2-3-3-6-2-7 1-.5 2 1 3 3v-8c0-2 2-2 2 0v-1c0-2 2-2 2 0v1c0-2 2-2 2 0v2c1-2 2-1 2 0 0 4 0 7-2 11h-6z" fill="#fff" stroke="#777"/>
<circle cx="1571.500" cy="383" r="6" fill="#f5f5f5" stroke="#888"/><rect x="1568.500" y="380" width="6" height="6" fill="none" stroke="#888"/><path d="M1576 388l5 5" stroke="#777" stroke-width="2.500"/>
<path d="M1570.500 401h5l-2.500 2.500z" fill="#888"/>
<path d="M1573 411c-4 1-3 5-2 6-3 0-5 1-5 3s4 2 5 3c0 2 1 4 2 4s3-3 2-5c3-1 6-1 6-2s-3-3-6-3c1-2 0-5-2-6z" fill="#fff" stroke="#888"/><path d="M1573 418v4M1571 420h4" stroke="#777"/>
<path d="M1570.500 435h5l-2.500 2.500z" fill="#888"/>
<rect x="1566" y="449" width="15" height="11" fill="#f5f5f5" stroke="#888"/><rect x="1568.500" y="452" width="10" height="4" fill="#d5d5d5" stroke="#888"/><path d="M1566 448l5-3 3 2 4-2" stroke="#888" fill="none"/>
<circle cx="1581.700" cy="475" r="3.500" fill="#bbb"/><rect x="1579.500" y="474.500" width="4.500" height="1" fill="#fff"/>

<!-- triad -->
<path d="M296.700 750V736" stroke="#1111cc" stroke-width="1.300"/><path d="M291 736.500c0-4 3-10 5.700-10 2.700 0 5.300 6 5.300 10-3 1-8 1-11 0z" fill="#0000a8"/>
<path d="M296.700 750l11-6" stroke="#0a0" stroke-width="1.100"/><path d="M306.500 738l11-1-7 11z" fill="#006f00"/>
<path d="M296.700 750l11 6.500" stroke="#b00000" stroke-width="1.100"/><path d="M306.500 764l1-9 3-2 6 9v2z" fill="#7c0000"/>
<text x="296" y="726" class="m" style="font-size:12.500px;fill:#4040ff;font-weight:bold">Z</text>
<text x="321.700" y="740" class="m" style="font-size:12px;fill:#44ee44;font-weight:bold">Y</text>
<text x="321.700" y="770.500" class="m" style="font-size:12px;fill:#ff5050;font-weight:bold">X</text>

<!-- 3D part -->
<path d="M727.300,397.300 777.300,426 777.700,556.700 727.300,529z" fill="url(#sd1)"/>
<path d="M677.300,557.300 727.300,585 727.300,643.300 677.300,615z" fill="#6f614a"/>
<path d="M727.300,643.300 777.700,615 777.700,745 727.300,716.700z" fill="url(#sd2)"/>
<path d="M1030.300,223.300 1080.300,251.700 1090.700,302.700 1040.700,275z" fill="url(#sd3)"/>
<path d="M807.300,409.300 1040.700,275 1090.700,302.700 796.700,472.300z" fill="url(#topb)"/>
<path d="M727.300,397.300 757.300,380.700 807.300,409.300 777.300,426z" fill="#948569"/>
<path d="M1030.300,223.300 1058,207.300 1108.300,235.700 1080.300,251.700z" fill="#928367"/>
<path d="M1108.300,310 1158.700,338 1108.300,366.700z" fill="#8f8062"/>
<path d="M677.300,557.300 727.300,529 777.700,556.700 727.300,585z" fill="#9d8d6d"/>
<g clip-path="url(#tan)">
<g transform="translate(900 380) skewY(30) translate(-900 -380)"><rect x="670" y="450" width="120" height="250" filter="url(#gt)" opacity=".28"/><rect x="790" y="100" width="375" height="440" filter="url(#gt)" opacity=".28"/></g>
<g stroke="#2b2418" fill="none" stroke-width="1"><path d="M832 398l44 26" stroke-width="1.200" opacity=".8"/><path d="M872 380l38 23" opacity=".6"/><path d="M902 355l45 28" stroke-width="2.200"/><path d="M952 328l41 29" opacity=".8"/><path d="M1010 293l40 30" opacity=".6"/></g>
</g>
<g clip-path="url(#sid)"><g transform="translate(800 500) skewY(30) translate(-800 -500)"><rect x="670" y="430" width="115" height="330" filter="url(#gt)" opacity=".45"/><rect x="1025" y="80" width="70" height="70" filter="url(#gt)" opacity=".45"/></g></g>
<!-- notches -->
<g fill="url(#nt)">
<path d="M1050,530.700 1090.700,507.300 1080.700,570 1056,557.700z"/>
<path d="M987,567.300 1027.700,543.300 1017,606.700 993,594.700z"/>
<path d="M923.300,604 964.300,580.300 954,643.300 929.500,631z"/>
<path d="M860.300,640.700 900.700,617.300 890.700,680 866,668z"/>
<path d="M797.300,676.700 838,653.300 827.300,716.700 803,704z"/>
</g>
<!-- blue face -->
<g clip-path="url(#face)">
<rect x="700" y="220" width="480" height="540" fill="#58788f"/>
<path d="M727 585L860 515 1000 420 1110 360V420L1000 490 860 570 727 645z" fill="#2d5278" filter="url(#bl)" opacity=".85"/>
<path d="M760 440L800 425 830 470 770 520z" fill="#8296a6" filter="url(#bl)" opacity=".8"/>
<path d="M1000 340L1100 280 1110 240 1080 240z" fill="#7790a4" filter="url(#bl)" opacity=".6"/>
<path d="M790 660L1100 480 1100 560 820 740z" fill="#7791a6" filter="url(#bl)" opacity=".5"/>
<g transform="translate(940 480) skewY(-24) translate(-940 -480)"><rect x="700" y="200" width="480" height="500" filter="url(#gb)" opacity=".4"/><rect x="700" y="200" width="480" height="500" filter="url(#gl)" opacity=".2"/></g>
<g stroke="#264a70" fill="none" stroke-width="1" opacity=".65"><path d="M780 476l28-14M780 488l40-17M780 630l90-42M800 658l110-52M840 600l90-40M960 540l70-30M1040 470l60-28M1030 575l60-30M1070 425l38-18M900 470l70-30M860 530l50-22M1000 440l50-22"/></g>
</g>
<path d="M777.300,426 807.300,409.300 796.700,472.300 1090.700,302.700 1080.300,251.700 1108.300,235.700 1108.300,366.700 1158.700,338 1158.700,391.600 1108.300,423.300 1108.300,555 1080.700,570 1090.700,507.300 1050,530.700 1061,581 1017,606.700 1027.700,543.300 987,567.300 998,618.300 954,643.300 964.300,580.300 923.300,604 934,654 890.700,680 900.700,617.300 860.300,640.700 871,691 827.300,716.700 838,653.300 797.300,676.700 807.300,728.300 777.700,745 777.700,615 727.300,643.300 727.300,585 777.700,556.700z" fill="none" stroke="#1e8fff" stroke-width="2.200"/>
<g fill="none" stroke="#3a3a3a" stroke-width=".9"><path d="M727.300,397.300 757.300,380.700 807.300,409.300M727.300,397.300V529M677.300,557.300 727.300,529M677.300,557.300V615L727.300,643.300M727.300,643.300V716.700L777.700,745M677.300,557.300 727.300,585M807.300,409.300 1040.700,275 1030.300,223.300 1058,207.300 1108.300,235.700M1108.300,310 1158.700,338M1030.300,223.300 1080.300,251.700M727.300,529 777.700,556.700"/></g>

<!-- mini toolbar -->
<rect x="855" y="525" width="7.700" height="20" rx="2" fill="#d9d9d9" stroke="#bbb" stroke-width=".5"/><path d="M858.800 529v13" stroke="#aaa" stroke-dasharray="1 2"/>
<rect x="867.300" y="525" width="87.700" height="20" rx="10" fill="url(#pl)"/>
<rect x="895.500" y="525" width="1" height="20" fill="#888"/><rect x="925.500" y="525" width="1" height="20" fill="#888"/>
<path d="M873 535l3-6h7v7h-3l-6 5z" fill="#dfe8f3" stroke="#1d4480"/><path d="M872 537h10v4h-10z" fill="#fff" stroke="#777"/><path d="M876 537l8-9 3 2-8 8z" fill="#f6c23a" stroke="#9a6a1a" stroke-width=".7"/>
<path d="M902 529h12v13h-12z" fill="#f3f3f3" stroke="#555"/><path d="M903 527l9 11 2-2-9-11z" fill="#f6c23a" stroke="#9a6a1a" stroke-width=".7"/><path d="M907 541h7" stroke="#1d4480"/><rect x="905" y="539" width="3" height="3" fill="#2c7fd4"/>
<path d="M933 529h12l-2 13h-10z" fill="#f3f3f3" stroke="#444"/><circle cx="933" cy="529" r="1.300" fill="#fff" stroke="#333"/><circle cx="946" cy="529" r="1.300" fill="#fff" stroke="#333"/><circle cx="933" cy="542" r="1.300" fill="#fff" stroke="#333"/><path d="M939 542l7-8 2 2-7 8z" fill="#f6c23a" stroke="#9a6a1a" stroke-width=".7"/><rect x="938" y="533.500" width="2" height="2" fill="#555"/>
</svg>
</body></html>
